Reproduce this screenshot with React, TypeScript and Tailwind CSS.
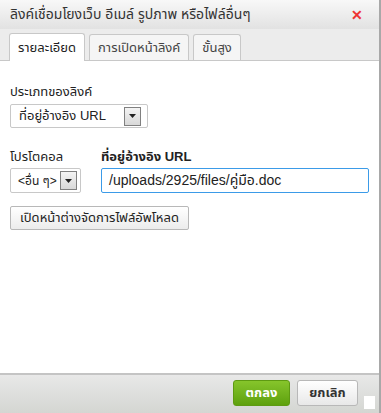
import React from "react";

function SelectArrow() {
  return (
    <span className="flex h-[19px] w-[17px] shrink-0 items-center justify-center border border-[#808080] bg-gradient-to-b from-[#f4f4f4] to-[#d8d8d8]">
      <svg width="7" height="4" viewBox="0 0 7 4">
        <path d="M0 0h7L3.5 4z" fill="#222" />
      </svg>
    </span>
  );
}

export default function App() {
  const font = "font-['Tahoma','Liberation_Sans','Noto_Sans_Thai','Noto_Sans',sans-serif]";
  return (
    <div className={`flex h-[413px] w-[381px] flex-col border-r-2 border-[#a8a8a8] bg-white text-[13px] text-[#222] ${font}`}>
      <div className="flex h-[29px] items-center justify-between bg-gradient-to-b from-[#f8f8f8] to-[#e2e2e2] pl-[10px] pr-[16px]">
        <span className="text-[14px] text-[#333]">ลิงค์เชื่อมโยงเว็บ อีเมล์ รูปภาพ หรือไฟล์อื่นๆ</span>
        <span className="text-[14px] font-bold leading-none text-[#e33]">✕</span>
      </div>
      <div className="flex h-[32px] items-end gap-[4px] border-b border-[#c8c8c8] bg-[#ececec] pl-[9px]">
        <div className="-mb-px flex h-[28px] items-center rounded-t-[3px] border border-b-0 border-[#c8c8c8] bg-white px-[8px]">รายละเอียด</div>
        <div className="flex h-[26px] items-center rounded-t-[3px] border border-b-0 border-[#c8c8c8] bg-[#f5f5f5] px-[8px] text-[#444]">การเปิดหน้าลิงค์</div>
        <div className="flex h-[26px] items-center rounded-t-[3px] border border-b-0 border-[#c8c8c8] bg-[#f5f5f5] px-[8px] text-[#444]">ขั้นสูง</div>
      </div>
      <div className="flex flex-1 flex-col px-[10px] pt-[22px]">
        <label className="leading-[18px]">ประเภทของลิงค์</label>
        <div className="mt-[3px] flex h-[24px] w-[138px] items-center justify-between rounded-[2px] border border-[#c8c8c8] bg-white pl-[8px] pr-[6px]">
          <span>ที่อยู่อ้างอิง URL</span>
          <SelectArrow />
        </div>
        <div className="mt-[20px] flex gap-[20px]">
          <div className="flex flex-col">
            <label className="leading-[18px]">โปรโตคอล</label>
            <div className="mt-[2px] flex h-[25px] w-[71px] items-center justify-between rounded-[2px] border border-[#c8c8c8] bg-white pl-[7px] pr-[3px]">
              <span className="whitespace-nowrap text-[12px]">&lt;อื่น ๆ&gt;</span>
              <SelectArrow />
            </div>
          </div>
          <div className="flex flex-1 flex-col">
            <label className="font-bold leading-[18px]">ที่อยู่อ้างอิง URL</label>
            <div className="mt-[2px] flex h-[25px] items-center rounded-[2px] border border-[#3b9be8] px-[7px] text-[14px]">
              /uploads/2925/files/คู่มือ.doc
            </div>
          </div>
        </div>
        <div className="mt-[13px] flex h-[24px] w-[179px] items-center justify-center rounded-[2px] border border-[#b8b8b8] bg-gradient-to-b from-white to-[#ececec]">
          เปิดหน้าต่างจัดการไฟล์อัพโหลด
        </div>
      </div>
      <div className="flex h-[40px] items-start justify-end gap-[7px] border-t-2 border-[#c4c4c4] bg-gradient-to-b from-[#e8e8e8] to-[#d4d6d2] pt-[5px] pr-[16px]">
        <div className="flex h-[26px] w-[57px] items-center justify-center rounded-[3px] border border-[#5e9a12] bg-gradient-to-b from-[#86c52b] to-[#5ea10c] font-bold text-white">ตกลง</div>
        <div className="flex h-[26px] w-[61px] items-center justify-center rounded-[3px] border border-[#b8b8b8] bg-gradient-to-b from-white to-[#e8e8e8] font-bold text-[#333]">ยกเลิก</div>
        <div className="-mr-[12px] mb-[4px] ml-[-1px] h-[13px] w-[11px] self-end bg-white" />
      </div>
    </div>
  );
}
